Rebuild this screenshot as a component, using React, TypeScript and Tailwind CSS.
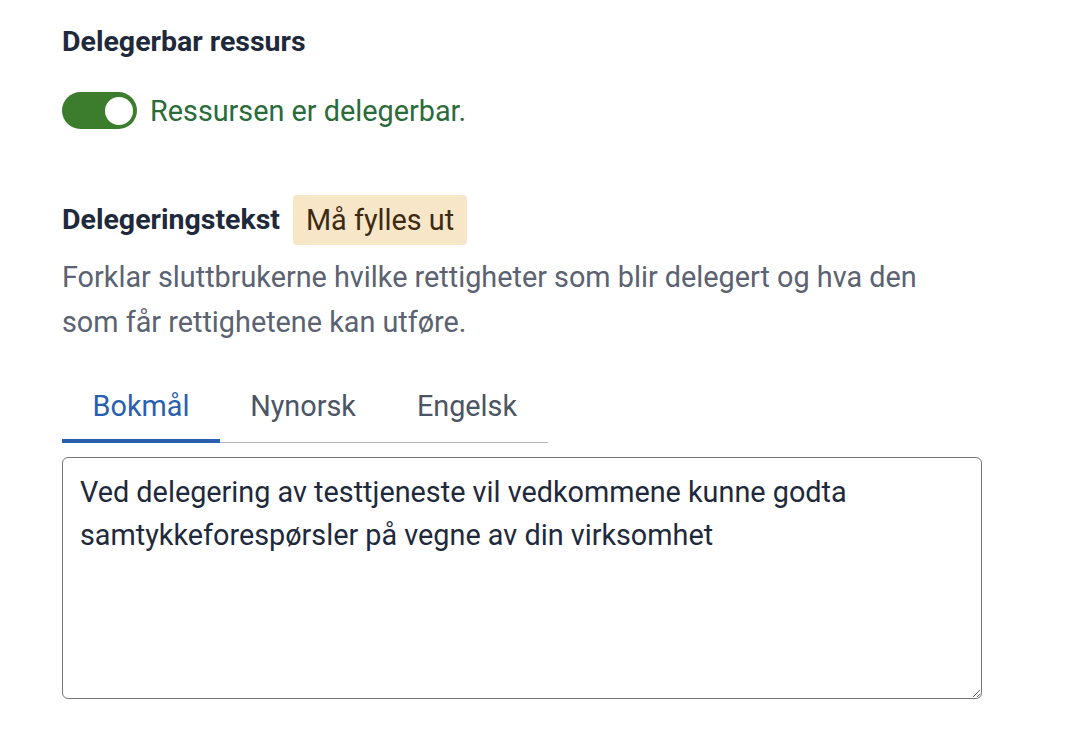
export default function App() {
  return (
    <div className="min-h-screen bg-white font-['Roboto',sans-serif] pl-[62px] pt-[24px]">
      <h2 className="text-[28.5px] font-bold leading-[36px] text-[#1e293b]">Delegerbar ressurs</h2>

      <div className="mt-[32px] flex items-center gap-[13px]">
        <button className="relative h-[37px] w-[75px] shrink-0 rounded-full bg-[#3b7d2c]">
          <span className="absolute right-[4px] top-[4.5px] h-[28px] w-[28px] rounded-full bg-white" />
        </button>
        <span className="text-[28.8px] leading-[36px] text-[#2a6b3a]">Ressursen er delegerbar.</span>
      </div>

      <div className="mt-[66px] flex items-center gap-[13px]">
        <span className="text-[28.5px] font-bold leading-[36px] text-[#1e293b]">Delegeringstekst</span>
        <span className="rounded-[4px] bg-[#f7e6c8] px-[13px] py-[7px] text-[28.8px] leading-[36px] text-[#3d2a12]">
          Må fylles ut
        </span>
      </div>

      <p className="mt-[10px] max-w-[880px] text-[28.8px] leading-[45px] text-[#5b6271]">
        Forklar sluttbrukerne hvilke rettigheter som blir delegert og hva den som får rettighetene kan utføre.
      </p>

      <div className="mt-[43px] flex w-[486px] border-b border-[#b5b5b5]">
        <div className="-mb-px w-[158px] border-b-[4px] border-[#2a5fb0] pb-[15px] text-center text-[28.8px] leading-[36px] text-[#2a5fb0]">
          Bokmål
        </div>
        <div className="w-[166px] pb-[15px] text-center text-[28.8px] leading-[36px] text-[#4b5563]">Nynorsk</div>
        <div className="w-[162px] pb-[15px] text-center text-[28.8px] leading-[36px] text-[#4b5563]">Engelsk</div>
      </div>

      <textarea
        className="mt-[14px] block h-[242px] w-[920px] resize-y rounded-[6px] border border-[#75757a] px-[17px] py-[13px] text-[28.8px] leading-[43px] text-[#1e293b] outline-none"
        defaultValue="Ved delegering av testtjeneste vil vedkommene kunne godta samtykkeforespørsler på vegne av din virksomhet"
      />
    </div>
  );
}
